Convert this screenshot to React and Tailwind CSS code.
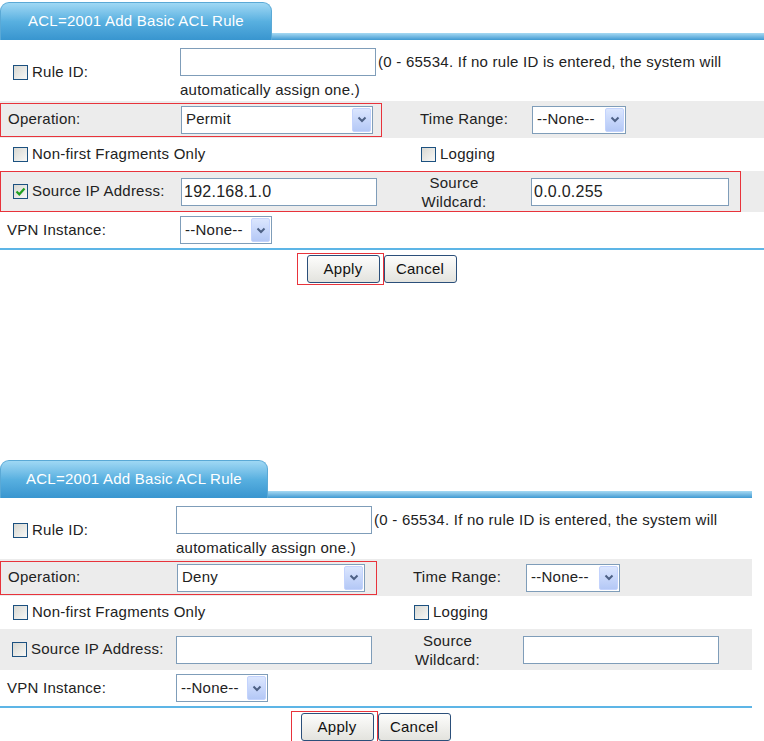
import React from 'react';

const FONT = { fontFamily: '"Liberation Sans", Arial, sans-serif' };

// two copies of the same dialog, the lower one is a touch narrower
const PANELS = [
  {
    op: 'Permit', checked: true, ip: '192.168.1.0', wildcard: '0.0.0.255', ipBox: true,
    wrap: 'w-[764px] pt-[2px]', tab: 'w-[272px]', col1: 'w-[180px]', input: 'w-[196px]', opBox: 'w-[382px]',
    opSelect: 'w-[192px]', trLabel: 'ml-[38px] w-[112px]', logGap: 'w-[421px]', wcCol: 'w-[154px]', wcInput: 'w-[198px]',
    rows: 'w-[764px]',
  },
  {
    op: 'Deny', checked: false, ip: '', wildcard: '', ipBox: false,
    wrap: 'w-[752px] mt-[175px]', tab: 'w-[268px]', col1: 'w-[176px]', input: 'w-[196px]', opBox: 'w-[377px]',
    opSelect: 'w-[188px]', trLabel: 'ml-[36px] w-[113px]', logGap: 'w-[414px]', wcCol: 'w-[151px]', wcInput: 'w-[196px]',
    rows: 'w-[752px]',
  },
];

function Checkbox({ checked }) {
  return (
    <span className="inline-flex items-center justify-center w-[15px] h-[15px] border border-[#1c5180] bg-gradient-to-br from-[#d8d8d2] to-[#f8f8f6] shrink-0">
      {checked && (
        <svg width="11" height="11" viewBox="0 0 11 11">
          <path d="M1.5 5.5 L4.3 8.3 L9.5 2.5" fill="none" stroke="#21a121" strokeWidth="2.2" />
        </svg>
      )}
    </span>
  );
}

function Select({ value, className }) {
  return (
    <div className={`h-[28px] border border-[#7f9db9] bg-white flex items-center justify-between pl-[4px] pr-[1px] ${className}`}>
      <span className="text-[15px] text-[#222]">{value}</span>
      <span className="w-[19px] h-[24px] rounded-[2px] border border-[#c3d3fd] bg-gradient-to-b from-[#dbe6fe] to-[#b4c8f6] flex items-center justify-center">
        <svg width="10" height="7" viewBox="0 0 10 7">
          <path d="M1.5 1.5 L5 5 L8.5 1.5" fill="none" stroke="#4d6185" strokeWidth="2" />
        </svg>
      </span>
    </div>
  );
}

function TextInput({ value, className }) {
  return (
    <div className={`h-[28px] border border-[#7f9db9] bg-white flex items-center px-[2px] text-[16px] text-[#222] ${className}`}>
      {value}
    </div>
  );
}

function Button({ children }) {
  return (
    <div className="w-[73px] h-[28px] rounded-[3px] border border-[#2b4f7a] bg-gradient-to-b from-[#fdfdfc] to-[#e3e3de] flex items-center justify-center text-[15px] text-[#111]">
      {children}
    </div>
  );
}

function Panel({ p }) {
  return (
    <div className={`${p.wrap} text-[15px] tracking-[0.25px] text-[#222]`}>
      <div className="flex items-end">
        <div className={`${p.tab} h-[38px] rounded-t-[9px] border border-b-0 border-[#5aa9d6] bg-gradient-to-b from-[#9fd8f4] via-[#58b0e0] to-[#3895cf] flex items-center justify-center text-white text-[15px]`}>
          ACL=2001 Add Basic ACL Rule
        </div>
        <div className="flex-1 h-[7px] bg-gradient-to-b from-[#a6daf3] to-[#3d9ad2]" />
      </div>

      <div className={p.rows}>
        {/* Rule ID */}
        <div className="flex h-[61px]">
          <div className={`${p.col1} flex items-center gap-[4px] pl-[13px] pt-[4px]`}>
            <Checkbox />
            <span>Rule ID:</span>
          </div>
          <div className="pt-[8px]">
            <div className="flex items-center gap-[2px]">
              <TextInput className={p.input} />
              <span>(0 - 65534. If no rule ID is entered, the system will</span>
            </div>
            <div className="mt-[3px]">automatically assign one.)</div>
          </div>
        </div>

        {/* Operation */}
        <div className="flex items-center h-[37px] bg-[#ececec]">
          <div className={`${p.opBox} h-[34px] border border-[#e8333b] flex items-center`}>
            <div className={`${p.col1} pl-[7px]`}>Operation:</div>
            <Select value={p.op} className={p.opSelect} />
          </div>
          <div className={p.trLabel}>Time Range:</div>
          <Select value="--None--" className="w-[94px]" />
        </div>

        {/* Fragments / Logging */}
        <div className="flex items-center h-[33px]">
          <div className={`${p.logGap} flex items-center gap-[4px] pl-[13px]`}>
            <Checkbox />
            <span>Non-first Fragments Only</span>
          </div>
          <div className="flex items-center gap-[4px]">
            <Checkbox />
            <span>Logging</span>
          </div>
        </div>

        {/* Source IP */}
        <div className="flex items-center h-[41px] bg-[#ececec]">
          <div className={`flex items-center h-[41px] ${p.ipBox ? 'w-[741px] border border-[#e8333b]' : 'w-full'}`}>
            <div className={`${p.col1} flex items-center gap-[4px] pl-[12px]`}>
              <Checkbox checked={p.checked} />
              <span>Source IP Address:</span>
            </div>
            <TextInput value={p.ip} className="w-[196px]" />
            <div className={`${p.wcCol} text-center leading-[19px]`}>
              Source<br />Wildcard:
            </div>
            <TextInput value={p.wildcard} className={p.wcInput} />
          </div>
        </div>

        {/* VPN */}
        <div className="flex items-center h-[36px]">
          <div className={`${p.col1} pl-[7px]`}>VPN Instance:</div>
          <Select value="--None--" className="w-[92px]" />
        </div>

        <div className="h-[2px] bg-[#5db5e6]" />

        <div className="flex justify-center items-center pt-[3px] pr-[11px]">
          <div className="border border-[#e8333b] pl-[9px] pr-[3px] py-[1px]">
            <Button>Apply</Button>
          </div>
          <Button>Cancel</Button>
        </div>
      </div>
    </div>
  );
}

export default function App() {
  return (
    <div className="w-[764px] h-[741px] bg-white overflow-hidden" style={FONT}>
      {PANELS.map((p, i) => (
        <Panel key={i} p={p} />
      ))}
    </div>
  );
}
